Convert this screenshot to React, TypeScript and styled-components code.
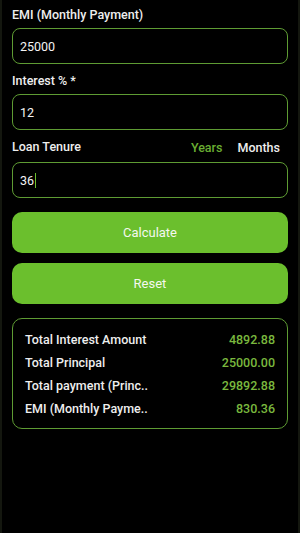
import React from "react";
import styled, { createGlobalStyle } from "styled-components";

const Global = createGlobalStyle`
  html, body { margin: 0; padding: 0; background: #000; }
  body { font-family: Roboto, "Noto Sans", sans-serif; color: #f2f2f2; }
  * { box-sizing: border-box; }
`;

const Screen = styled.div`
  width: 300px;
  height: 533px;
  background: #000;
  border-left: 2px solid #14170f;
  border-right: 2px solid #14170f;
  padding: 5px 10px 0 10px;
  display: flex;
  flex-direction: column;
`;

const Label = styled.div`
  height: 20px;
  line-height: 20px;
  font-size: 12.5px;
  font-weight: 500;
  color: #eeeeee;
`;

const LabelRow = styled.div`
  height: 20px;
  display: flex;
  align-items: center;
  justify-content: space-between;
  margin-top: 7px;
`;

const UnitGroup = styled.div`
  display: flex;
  gap: 15px;
  padding-right: 8px;
`;

const Unit = styled.span<{ $active?: boolean }>`
  font-size: 12.5px;
  font-weight: 500;
  color: ${(p) => (p.$active ? "#69ad32" : "#eeeeee")};
`;

const Field = styled.div<{ $gap?: number }>`
  height: 36px;
  margin-top: ${(p) => p.$gap ?? 3}px;
  border: 1px solid #5e9b33;
  border-radius: 8px;
  display: flex;
  align-items: center;
  padding-left: 7px;
  font-size: 12.5px;
  color: #f4f4f4;
`;

const Caret = styled.span`
  display: inline-block;
  width: 1.5px;
  height: 15px;
  background: #6dbf2e;
  margin-left: 0.5px;
`;

const Spacer = styled.div<{ $h: number }>`
  height: ${(p) => p.$h}px;
`;

const Button = styled.button`
  height: 41px;
  width: 100%;
  border: none;
  border-radius: 10px;
  background: #6bbf2d;
  color: #f4f8ef;
  font-family: Roboto, "Noto Sans", sans-serif;
  font-size: 13px;
  font-weight: 400;
  cursor: pointer;
`;

const Card = styled.div`
  margin-top: 14px;
  border: 1px solid #5e9b33;
  border-radius: 10px;
  padding: 9px 12px 8px 12px;
  display: flex;
  flex-direction: column;
`;

const Row = styled.div`
  height: 23px;
  display: flex;
  align-items: center;
  justify-content: space-between;
  font-size: 12.5px;
  font-weight: 500;
`;

const RowLabel = styled.span`
  color: #eeeeee;
`;

const RowValue = styled.span`
  color: #7ab83e;
`;

const results = [
  ["Total Interest Amount", "4892.88"],
  ["Total Principal", "25000.00"],
  ["Total payment (Princ..", "29892.88"],
  ["EMI (Monthly Payme..", "830.36"],
];

export default function App() {
  return (
    <>
      <Global />
      <Screen>
        <Label>EMI (Monthly Payment)</Label>
        <Field>25000</Field>
        <LabelRow>
          <Label>Interest % *</Label>
        </LabelRow>
        <Field>12</Field>
        <LabelRow>
          <Label>Loan Tenure</Label>
          <UnitGroup>
            <Unit $active>Years</Unit>
            <Unit>Months</Unit>
          </UnitGroup>
        </LabelRow>
        <Field $gap={5}>
          36
          <Caret />
        </Field>
        <Spacer $h={14} />
        <Button>Calculate</Button>
        <Spacer $h={10} />
        <Button>Reset</Button>
        <Card>
          {results.map(([l, v]) => (
            <Row key={l}>
              <RowLabel>{l}</RowLabel>
              <RowValue>{v}</RowValue>
            </Row>
          ))}
        </Card>
      </Screen>
    </>
  );
}
